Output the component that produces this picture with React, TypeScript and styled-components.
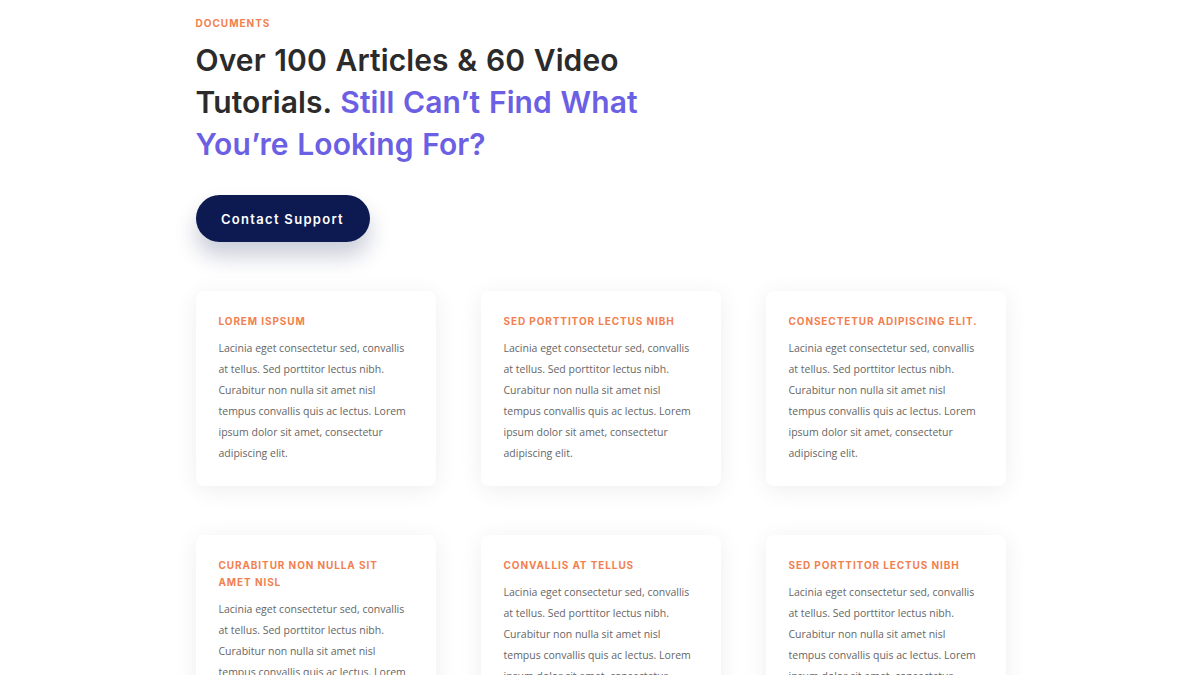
import React from 'react'
import styled, { createGlobalStyle } from 'styled-components'

const GlobalStyle = createGlobalStyle`
  * { box-sizing: border-box; }
  body {
    margin: 0;
    background: #ffffff;
    font-family: 'Open Sans', 'Liberation Sans', sans-serif;
  }
`

const Page = styled.div`
  width: 811px;
  margin: 0 auto;
  padding: 16px 0 0 1px;
`

const Eyebrow = styled.div`
  font-family: 'Inter', 'Liberation Sans', sans-serif;
  font-size: 10px;
  font-weight: 700;
  letter-spacing: 1px;
  color: #f2804f;
  text-transform: uppercase;
  line-height: 14px;
`

const Heading = styled.h1`
  margin: 9px 0 0;
  width: 470px;
  font-family: 'Inter', 'Liberation Sans', sans-serif;
  font-size: 30px;
  font-weight: 600;
  line-height: 42px;
  letter-spacing: 0.1px;
  word-spacing: 1px;
  color: #2b2b2b;
`

const Accent = styled.span`
  color: #6b60e4;
`

const Button = styled.button`
  margin-top: 30px;
  width: 174px;
  height: 47px;
  border: none;
  border-radius: 24px;
  background: #0d1a52;
  color: #ffffff;
  font-family: 'Inter', 'Liberation Sans', sans-serif;
  font-size: 13px;
  font-weight: 600;
  letter-spacing: 1.3px;
  box-shadow: 0 14px 22px rgba(13, 26, 82, 0.22);
  cursor: pointer;
`

const Grid = styled.div`
  margin-top: 49px;
  display: grid;
  grid-template-columns: repeat(3, 240px);
  align-items: start;
  column-gap: 45px;
  row-gap: 49px;
`

const Card = styled.div`
  background: #ffffff;
  border-radius: 8px;
  padding: 22px 27px 22px 23px;
  box-shadow: 0 4px 24px rgba(0, 0, 0, 0.07);
`

const CardTitle = styled.h3`
  margin: 0;
  font-family: 'Inter', 'Liberation Sans', sans-serif;
  font-size: 10px;
  font-weight: 700;
  letter-spacing: 0.9px;
  line-height: 17px;
  color: #f2804f;
  text-transform: uppercase;
`

const CardText = styled.p`
  margin: 8px 0 0;
  font-size: 10.5px;
  line-height: 21px;
  color: #666666;
`

const body =
  'Lacinia eget consectetur sed, convallis at tellus. Sed porttitor lectus nibh. Curabitur non nulla sit amet nisl tempus convallis quis ac lectus. Lorem ipsum dolor sit amet, consectetur adipiscing elit.'

const cards = [
  'Lorem Ispsum',
  'Sed porttitor lectus nibh',
  'Consectetur adipiscing elit.',
  'Curabitur non nulla sit amet nisl',
  'Convallis at tellus',
  'Sed porttitor lectus nibh',
]

export default function App() {
  return (
    <>
      <GlobalStyle />
      <Page>
        <Eyebrow>Documents</Eyebrow>
        <Heading>
          Over 100 Articles &amp; 60 Video Tutorials.{' '}
          <Accent>Still Can’t Find What You’re Looking For?</Accent>
        </Heading>
        <Button>Contact Support</Button>
        <Grid>
          {cards.map((title, i) => (
            <Card key={i}>
              <CardTitle>{title}</CardTitle>
              <CardText>{body}</CardText>
            </Card>
          ))}
        </Grid>
      </Page>
    </>
  )
}
